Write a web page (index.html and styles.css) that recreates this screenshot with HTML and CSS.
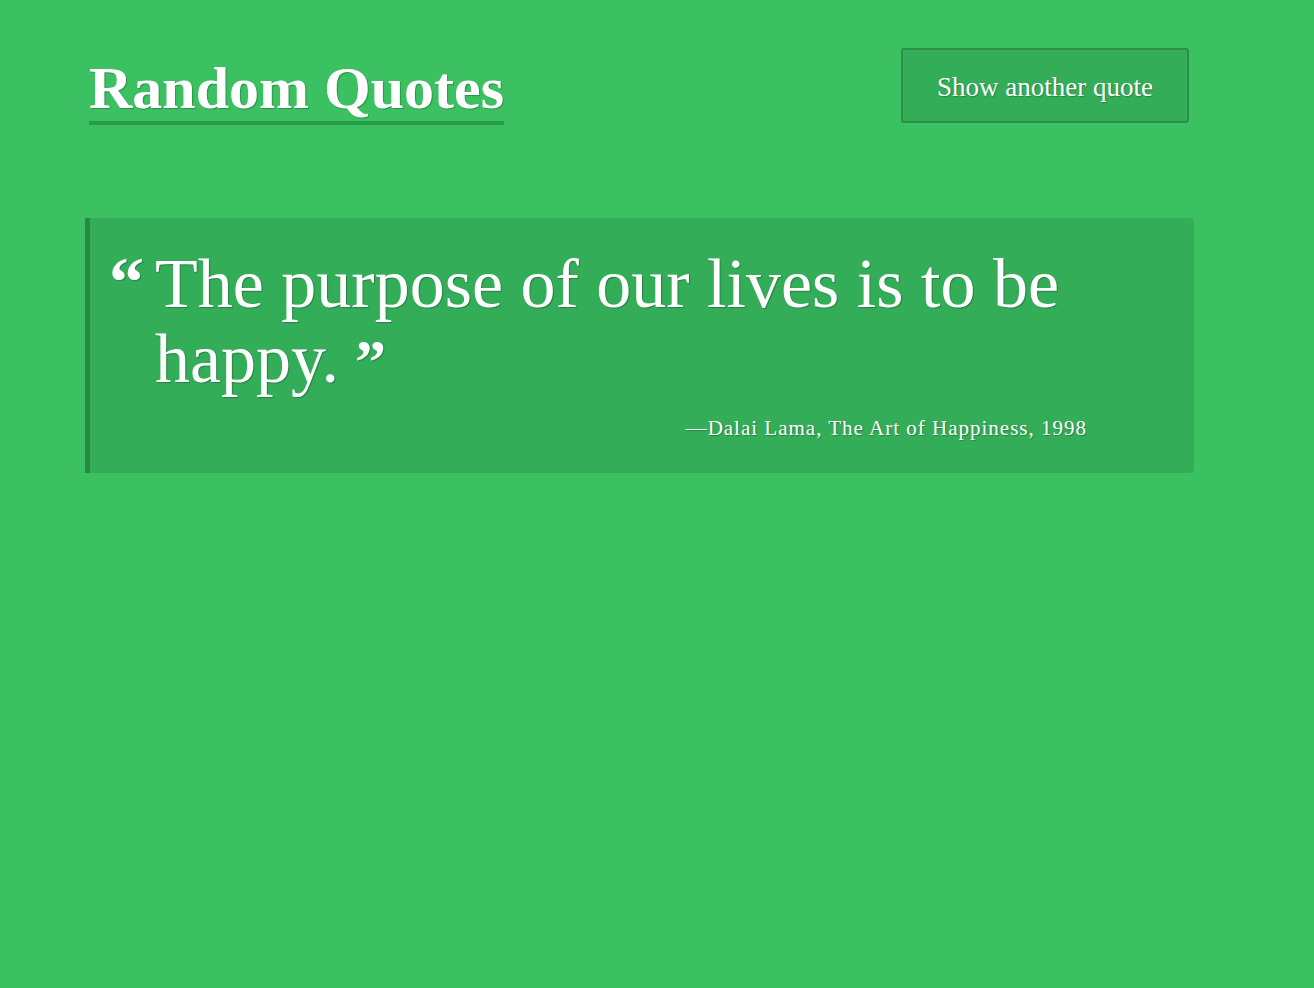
FILE: index.html
```html
<!DOCTYPE html>
<html>
<head>
<meta charset="utf-8">
<link rel="stylesheet" href="styles.css">
</head>
<body>
<div class="page">
  <header class="top">
    <h1 class="title">Random Quotes</h1>
    <button class="btn">Show another quote</button>
  </header>
  <blockquote class="quote">
    <p class="text"><span class="open">&ldquo;</span>The purpose of our lives is to be happy.<span class="close">&rdquo;</span></p>
    <p class="cite">&mdash;Dalai Lama, The Art of Happiness, 1998</p>
  </blockquote>
</div>
</body>
</html>
```
FILE: styles.css
```css
html, body {
  margin: 0;
  padding: 0;
  background: #3bc162;
  height: 100%;
}
body {
  font-family: "Liberation Serif", "DejaVu Serif", serif;
  color: #fff;
  text-shadow: 1px 1px 1px rgba(0, 0, 0, 0.25);
}
.page {
  padding: 48px 120px 0 85px;
}
.top {
  display: flex;
  justify-content: space-between;
  align-items: flex-start;
  padding: 0 5px 0 4px;
}
.title {
  margin: 0;
  font-size: 60px;
  font-weight: bold;
  line-height: 66px;
  padding-top: 7px;
  border-bottom: 4px solid #2a9a4b;
}
.btn {
  width: 288px;
  height: 75px;
  background: #34ad59;
  border: 2px solid #2a8f47;
  border-radius: 3px;
  color: #fff;
  font-family: inherit;
  font-size: 27px;
  text-shadow: 1px 1px 1px rgba(0, 0, 0, 0.25);
  padding: 4px 0 0 0;
}
.quote {
  margin: 93px 0 0 0;
  background: #34ad59;
  border-left: 5px solid #25893f;
  border-radius: 0 4px 4px 0;
  padding: 28px 107px 32px 65px;
}
.text {
  margin: 0;
  position: relative;
  font-size: 70px;
  line-height: 75px;
}
.open {
  position: absolute;
  left: -46px;
  top: -2px;
  font-size: 70px;
  font-weight: bold;
}
.close {
  font-size: 62px;
  font-weight: bold;
  margin-left: 16px;
}
.cite {
  margin: 17px 0 0 0;
  text-align: right;
  font-size: 21px;
  letter-spacing: 1px;
}
```
